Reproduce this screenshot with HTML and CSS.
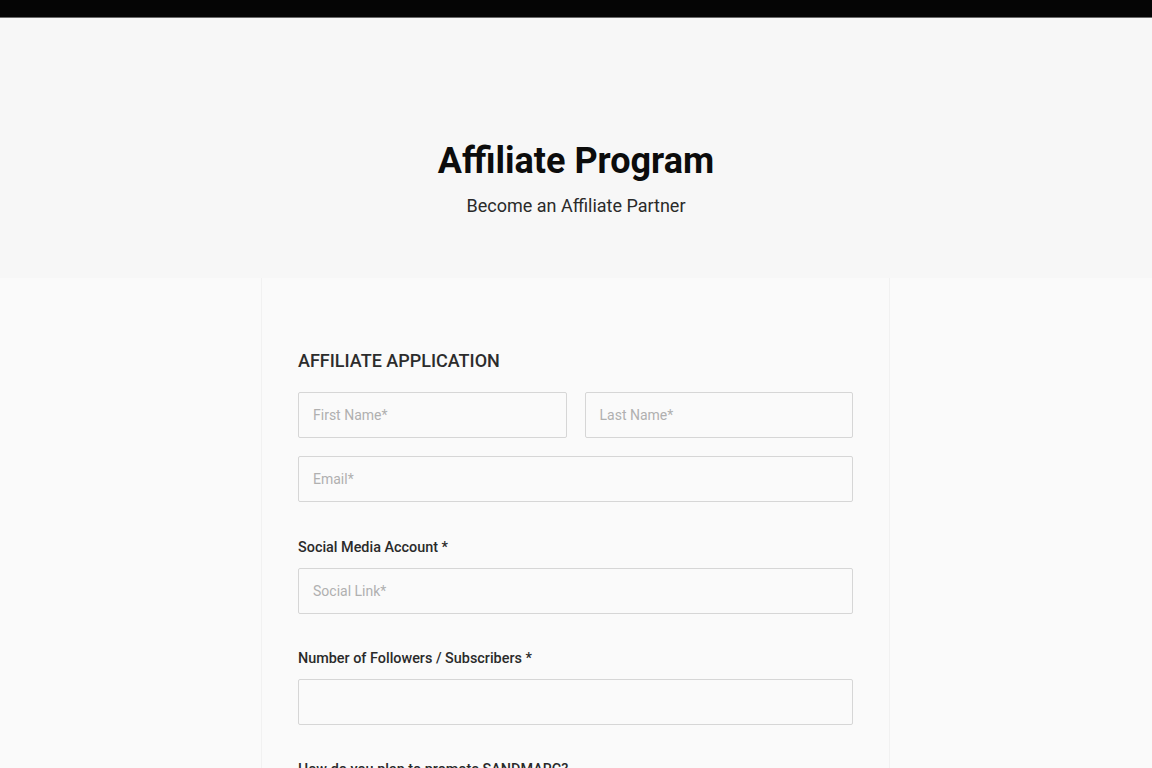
FILE: index.html
```html
<!DOCTYPE html>
<html lang="en">
<head>
<meta charset="utf-8">
<title>Affiliate Program</title>
<link rel="stylesheet" href="styles.css">
</head>
<body>
<header class="topbar"></header>
<section class="hero">
  <h1 class="hero-title">Affiliate Program</h1>
  <p class="hero-sub">Become an Affiliate Partner</p>
</section>
<main class="main">
  <div class="card">
    <h2 class="card-title">AFFILIATE APPLICATION</h2>
    <div class="row two">
      <div class="input"><span class="ph">First Name*</span></div>
      <div class="input"><span class="ph">Last Name*</span></div>
    </div>
    <div class="row">
      <div class="input"><span class="ph">Email*</span></div>
    </div>
    <div class="group">
      <label class="label">Social Media Account *</label>
      <div class="input"><span class="ph">Social Link*</span></div>
    </div>
    <div class="group">
      <label class="label">Number of Followers / Subscribers *</label>
      <div class="input"></div>
    </div>
    <div class="group">
      <label class="label">How do you plan to promote SANDMARC?</label>
      <div class="input tall"></div>
    </div>
  </div>
</main>
</body>
</html>
```
FILE: styles.css
```css
* { box-sizing: border-box; }
html, body { margin: 0; padding: 0; }
body {
  font-family: Roboto, "Noto Sans", "Liberation Sans", sans-serif;
  background: #fafafa;
  color: #222;
}
.topbar {
  height: 18px;
  background: #050505;
  border-bottom: 1px solid #6a6a6a;
}
.hero {
  background: #f7f7f7;
  height: 260px;
  display: flex;
  flex-direction: column;
  align-items: center;
  padding-top: 121px;
}
.hero-title {
  margin: 0;
  font-size: 36px;
  font-weight: 700;
  line-height: 44px;
  color: #0c0c0c;
}
.hero-sub {
  margin: 11px 0 0;
  font-size: 18px;
  line-height: 24px;
  color: #2a2a2a;
}
.main {
  display: flex;
  justify-content: center;
}
.card {
  width: 629px;
  background: #fafafa;
  border-left: 1px solid #f1f1f1;
  border-right: 1px solid #f1f1f1;
  padding: 72px 36px 40px;
  margin-left: -1px;
}
.card-title {
  margin: 0 0 20px;
  font-size: 18px;
  font-weight: 500;
  line-height: 22px;
  color: #2c2c2c;
}
.row {
  display: flex;
  gap: 18px;
  margin-bottom: 18px;
}
.row .input { flex: 1; }
.input {
  height: 46px;
  border: 1px solid #d6d6d6;
  border-radius: 2px;
  background: #fafafa;
  display: flex;
  align-items: center;
  padding-left: 14px;
}
.input.tall { height: 120px; }
.ph {
  font-size: 14px;
  color: #b0b0b0;
}
.group {
  margin-top: 37px;
}
.label {
  display: block;
  font-size: 14.4px;
  font-weight: 500;
  line-height: 18px;
  color: #2a2a2a;
  margin-bottom: 11px;
}
.group + .group { margin-top: 36px; }
```
